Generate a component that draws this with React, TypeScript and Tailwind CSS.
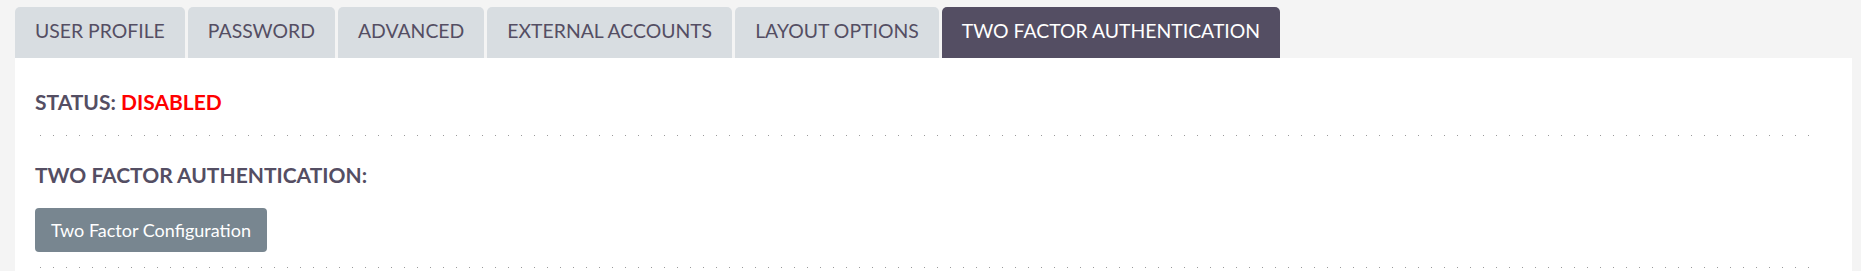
import React, { useState } from "react";

const tabs = [
  "USER PROFILE",
  "PASSWORD",
  "ADVANCED",
  "EXTERNAL ACCOUNTS",
  "LAYOUT OPTIONS",
  "TWO FACTOR AUTHENTICATION",
];

// dotted separator, one grey dot every 13px
const Dots = () => (
  <div className="ml-[25px] mr-[37px] h-px bg-[image:linear-gradient(to_right,#9a9a9a_1px,transparent_1px)] bg-[size:13px_1px] bg-repeat-x" />
);

const App: React.FC = () => {
  const [active, setActive] = useState(5);

  return (
    <div className="min-h-[271px] bg-[#f4f4f4] pt-[7px] font-['Lato','Liberation_Sans',sans-serif]">
      {/* Tabs */}
      <div className="ml-[15px] flex gap-[3px]">
        {tabs.map((tab, i) => (
          <button
            key={tab}
            onClick={() => setActive(i)}
            className={`flex h-[51px] items-center rounded-t-[5px] px-[20px] pb-[3px] text-[19.4px] ${
              i === active
                ? "bg-[#544e63] text-white"
                : "bg-[#d8dde1] text-[#544e63]"
            }`}
          >
            {tab}
          </button>
        ))}
      </div>

      {/* Panel */}
      <div className="ml-[15px] mr-[9px] h-[213px] bg-white">
        <div className="pl-[20px] pt-[32px] pb-[21px] text-[21px] leading-[24px] font-bold text-[#544e63]">
          STATUS: <span className="text-[#ff0000]">DISABLED</span>
        </div>
        <Dots />
        <div className="pl-[20px] pt-[27px] text-[21px] leading-[24px] font-bold text-[#544e63]">
          TWO FACTOR AUTHENTICATION:
        </div>
        <div className="pl-[20px] pt-[21px] pb-[15px]">
          <button className="h-[44px] rounded-[4px] bg-[#788690] px-[16px] text-[18px] text-white">
            Two Factor Configuration
          </button>
        </div>
        <Dots />
      </div>
    </div>
  );
};

export default App;
